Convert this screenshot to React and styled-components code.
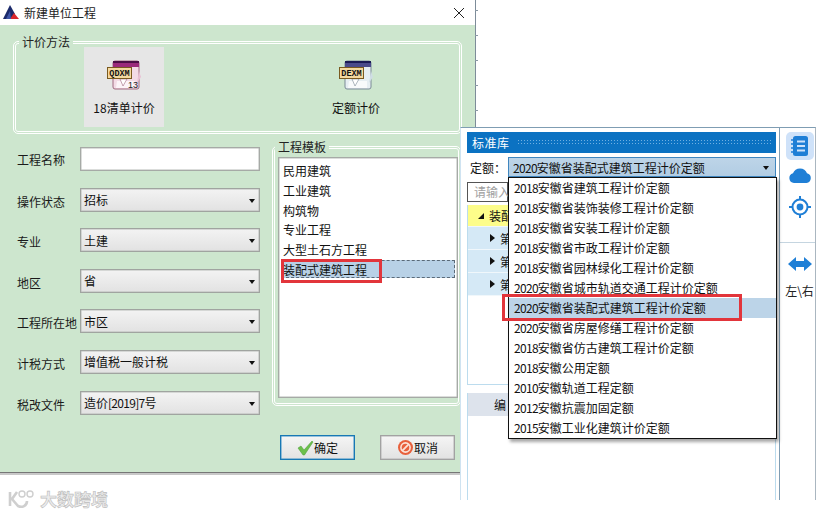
import React from "react";
import styled, { createGlobalStyle } from "styled-components";

const Global = createGlobalStyle`
  html, body { margin: 0; padding: 0; background: #fff; }
  * { box-sizing: border-box; }
  body { font-family: "Noto Sans CJK SC", "Liberation Sans", sans-serif; font-size: 12px; color: #111; }
`;

const Desktop = styled.div`
  position: relative;
  width: 823px;
  height: 516px;
  overflow: hidden;
  background: #fff;
`;

const DialogWindow = styled.div`
  position: absolute;
  left: 0;
  top: 0;
  width: 476px;
  height: 475px;
  display: flex;
  flex-direction: column;
  background: #cde6ce;
  border-right: 1.5px solid #7d8c99;
  border-bottom: 2px solid #c8c8c8;
  box-shadow: inset 0 -1px 0 #777;
  &::after {
    content: "";
    position: absolute;
    left: 100%;
    top: 10px;
    width: 3px;
    height: 110px;
    background: repeating-linear-gradient(#8a98a4 0 1px, transparent 1px 25px);
  }
`;

const TitleBar = styled.div`
  height: 25px;
  flex: none;
  display: flex;
  align-items: center;
  background: #fff;
  padding: 0 9px 0 3px;
  gap: 4px;
`;

const TitleText = styled.span`
  flex: 1;
  line-height: 25px;
  color: #222;
`;

const CloseMark = styled.svg`
  width: 12px;
  height: 12px;
  margin-right: 1px;
`;

const Group = styled.fieldset`
  margin: ${(p) => p.$margin};
  padding: ${(p) => p.$padding};
  min-width: 0;
  align-self: flex-start;
  border: 3px double #fff;
  border-radius: 5px;
`;

const GroupTitle = styled.legend`
  margin-left: ${(p) => p.$inset}px;
  padding: 0 3px;
  line-height: 10px;
  color: #222;
`;

const MethodGroup = styled(Group)`
  align-self: stretch;
`;

const MethodRow = styled.div`
  display: flex;
  height: 80px;
  padding-left: 68px;
  gap: 152px;
`;

const MethodTile = styled.div`
  width: 80px;
  height: 80px;
  display: flex;
  flex-direction: column;
  align-items: center;
  padding-top: 12px;
  background: ${(p) => (p.$active ? "#e6e6e6" : "transparent")};
`;

const MethodIcon = styled.svg`
  width: 34px;
  height: 32px;
  flex: none;
`;

const MethodName = styled.span`
  margin-top: 8px;
  line-height: 18px;
`;

const FormArea = styled.div`
  display: flex;
  margin-top: 13px;
  padding-left: 17px;
`;

const FieldGrid = styled.div`
  width: 243px;
  display: grid;
  grid-template-columns: 63px 180px;
  grid-auto-rows: 24px;
  row-gap: 16.6px;
  align-items: center;
`;

const FieldLabel = styled.span`
  padding-top: ${(p) => (p.$flat ? 0 : 3)}px;
  white-space: nowrap;
  color: #1a1a1a;
`;

const TextInput = styled.div`
  height: 24px;
  background: #fff;
  border: 1px solid #a6aaa6;
  box-shadow: inset 0 0 0 0.5px #b8bcb8;
`;

const SelectBox = styled.div`
  height: 24px;
  display: flex;
  align-items: center;
  justify-content: space-between;
  padding: 0 4px 0 3px;
  background: linear-gradient(#f3f3f3, #e2e2e2);
  border: 1px solid #a0a4a0;
  box-shadow: inset 0 0 0 0.5px #b8bcb8;
  color: #111;
`;

const Num = styled.span`
  letter-spacing: -0.7px;
`;

const Caret = styled.i`
  width: 0;
  height: 0;
  margin-top: 2px;
  border-left: 3.5px solid transparent;
  border-right: 3.5px solid transparent;
  border-top: 4px solid #111;
`;

const TemplateList = styled.div`
  width: 180px;
  height: 241px;
  margin: 5px 0 0 3px;
  padding: 3px 2px;
  background: #fff;
  border: 1px solid #a6aaa6;
  box-shadow: inset 0 0 0 0.5px #b8bcb8;
`;

const TemplateItem = styled.div`
  height: ${(p) => (p.$selected ? 18 : 19.8)}px;
  line-height: 20px;
  padding-left: 2px;
  background: ${(p) => (p.$selected ? "#b8d1e6" : "transparent")};
  outline: ${(p) => (p.$selected ? "1px dashed #5a6a78" : "none")};
  outline-offset: -1px;
`;

const Footer = styled.div`
  display: flex;
  justify-content: flex-end;
  gap: 25px;
  margin-top: 20px;
  padding-right: 20px;
`;

const ActionButton = styled.div`
  width: 75px;
  height: 25px;
  display: flex;
  align-items: center;
  justify-content: center;
  gap: 0;
  background: linear-gradient(#f5f5f5, #e2e2e2);
  border: 1px solid ${(p) => (p.$primary ? "#1878b4" : "#a2a2a2")};
  box-shadow: inset 0 0 0 0.5px ${(p) => (p.$primary ? "#3a90c4" : "#b4b4b4")};
`;

const ButtonIcon = styled.svg`
  width: 17px;
  height: 17px;
`;

const RedFrame = styled.div`
  position: absolute;
  left: ${(p) => p.$x}px;
  top: ${(p) => p.$y}px;
  width: ${(p) => p.$w}px;
  height: ${(p) => p.$h}px;
  border: 3px solid #e2353b;
  pointer-events: none;
`;

const Watermark = styled.div`
  position: absolute;
  left: 7px;
  top: 488px;
  display: flex;
  align-items: center;
  gap: 4px;
`;

const WatermarkText = styled.span`
  font-size: 17px;
  line-height: 22px;
  font-weight: 700;
  color: #ececec;
  -webkit-text-stroke: 0.6px #bdbdbd;
`;

const LibraryWindow = styled.div`
  position: absolute;
  left: 460px;
  top: 127px;
  width: 356px;
  height: 373px;
  display: flex;
  background: #fff;
  border-top: 1px solid #7f9db3;
  border-left: 1px solid #cfe3f1;
  border-right: 1px solid #aab6c0;
`;

const LibraryMain = styled.div`
  position: relative;
  width: 319px;
  flex: none;
  padding: 4px 3px 0 6px;
  display: flex;
  flex-direction: column;
  border-right: 1.5px solid #7f9db3;
`;

const Banner = styled.div`
  height: 21px;
  flex: none;
  display: flex;
  align-items: center;
  padding: 0 5px;
  gap: 7px;
  background: #0b72c2;
  color: #fff;
  letter-spacing: 0.5px;
`;

const BannerDots = styled.i`
  flex: 1;
  height: 7px;
  background-image: radial-gradient(circle, #6fb0e2 0.6px, transparent 0.9px);
  background-size: 3px 3px;
`;

const ComboRow = styled.div`
  display: flex;
  align-items: center;
  height: 20px;
  margin-top: 4px;
  padding-left: 3px;
`;

const ComboLabel = styled.span`
  width: 38px;
  flex: none;
`;

const ComboBox = styled.div`
  flex: 1;
  height: 20px;
  display: flex;
  align-items: center;
  justify-content: space-between;
  padding: 0 6px 0 4px;
  background: linear-gradient(#bdd4e8, #b2cde3);
  border: 1px solid #3f86bf;
`;

const SearchBox = styled.div`
  width: 41px;
  height: 20px;
  margin-top: 5px;
  padding-left: 6px;
  line-height: 18px;
  color: #a0a0a0;
  border: 1px solid #555;
  background: #fff;
  white-space: nowrap;
`;

const TreeBox = styled.div`
  height: 180px;
  margin-top: 3px;
  border: 1px solid #bcdcee;
  border-top: none;
`;

const TreeRow = styled.div`
  height: ${(p) => (p.$root ? 22 : 23)}px;
  display: flex;
  align-items: center;
  gap: 5px;
  padding-left: ${(p) => (p.$root ? 10 : 22)}px;
  background: ${(p) => (p.$root ? "#fdfd8a" : "#d5e9f6")};
  border-bottom: 1px solid #f0f7fb;
  white-space: nowrap;
`;

const TreeArrow = styled.i`
  width: 0;
  height: 0;
  flex: none;
  ${(p) =>
    p.$open
      ? "border-bottom: 6px solid #111; border-left: 6px solid transparent;"
      : "border-left: 5px solid #111; border-top: 4px solid transparent; border-bottom: 4px solid transparent;"}
`;

const TableBox = styled.div`
  flex: 1;
  margin-top: 8px;
  border-left: 1px solid #bcdcee;
  border-right: 1px solid #bcdcee;
`;

const TableHead = styled.div`
  height: 23px;
  line-height: 23px;
  padding-left: 26px;
  background: #dde3ec;
`;

const DropList = styled.div`
  position: absolute;
  left: 47px;
  top: 49px;
  width: 269px;
  height: 262px;
  background: #fff;
  border: 1px solid #111;
  box-shadow: 2px 3px 3px rgba(0, 0, 0, 0.35);
`;

const DropItem = styled.div`
  height: 20px;
  line-height: 20px;
  padding-left: 5px;
  white-space: nowrap;
  background: ${(p) => (p.$current ? "#bcd4e8" : "transparent")};
`;

const ToolStrip = styled.div`
  flex: 1;
  display: flex;
  flex-direction: column;
  align-items: center;
`;

const ToolTile = styled.div`
  width: 28px;
  height: 28px;
  margin: 4px 0 0 4px;
  display: flex;
  align-items: center;
  justify-content: center;
  border-radius: 5px;
  background: ${(p) => (p.$active ? "#cfe2f9" : "transparent")};
`;

const ToolIcon = styled.svg`
  width: 24px;
  height: 24px;
  margin-left: 4px;
  margin-top: ${(p) => p.$top}px;
  flex: none;
`;

const ToolDivider = styled.div`
  align-self: stretch;
  height: 1px;
  margin-top: 23px;
  background: #c5d5e0;
`;

const ToolCaption = styled.span`
  margin: 6px 0 0 4px;
  color: #222;
`;

const Hue = "#1f7fd6";

const AppLogo = () => (
  <svg width="17" height="15" viewBox="0 0 17 15">
    <polygon points="0,14 7,0 12,9 8,14" fill="#1b2a6b" />
    <polygon points="7,14 11,8 16,14" fill="#d8262c" />
    <polygon points="3,14 7,6 8,14" fill="#3f56a8" />
  </svg>
);

const DocIcon = ({ bar, barDark, page, fold, code, edge, num }) => (
  <MethodIcon viewBox="0 0 34 32">
    <rect x="6" y="2" width="26" height="28" rx="2" fill={page} stroke={edge} />
    <rect x="6" y="2" width="26" height="6" fill={bar} />
    <rect x="6" y="2" width="26" height="2" fill={barDark} />
    <path d="M32 12 L34 18 L30 24 Z" fill={fold} />
    <path d="M10 22 L28 22 L28 29 L9 29 Z" fill="#fff" opacity="0.7" />
    <path d="M13 20 L16 27 L20 20 Z" fill="#fff" stroke={edge} strokeWidth="0.6" />
    <rect x="0.5" y="8.5" width="24" height="11" fill="#f4d9a0" stroke="#7a5a20" />
    <text x="12.5" y="17" textAnchor="middle" fontFamily="Liberation Mono, monospace" fontWeight="700" fontSize="8.5" fill="#111">{code}</text>
    {num ? <text x="26" y="29" textAnchor="middle" fontFamily="Liberation Sans, sans-serif" fontSize="9" fill="#222">{num}</text> : null}
  </MethodIcon>
);

const fields = [
  ["操作状态", "招标"],
  ["专业", "土建"],
  ["地区", "省"],
  ["工程所在地", "市区"],
  ["计税方式", "增值税一般计税"],
  ["税改文件", <>造价<Num>[2019]7</Num>号</>],
];

const templates = ["民用建筑", "工业建筑", "构筑物", "专业工程", "大型土石方工程", "装配式建筑工程"];

const quotas = [
  "2018安徽省建筑工程计价定额",
  "2018安徽省装饰装修工程计价定额",
  "2018安徽省安装工程计价定额",
  "2018安徽省市政工程计价定额",
  "2018安徽省园林绿化工程计价定额",
  "2020安徽省城市轨道交通工程计价定额",
  "2020安徽省装配式建筑工程计价定额",
  "2020安徽省房屋修缮工程计价定额",
  "2018安徽省仿古建筑工程计价定额",
  "2018安徽公用定额",
  "2010安徽轨道工程定额",
  "2012安徽抗震加固定额",
  "2015安徽工业化建筑计价定额",
];

export default function App() {
  return (
    <Desktop>
      <Global />
      <DialogWindow>
        <TitleBar>
          <AppLogo />
          <TitleText>新建单位工程</TitleText>
          <CloseMark viewBox="0 0 12 12">
            <path d="M1 1 L11 11 M11 1 L1 11" stroke="#222" strokeWidth="1" fill="none" />
          </CloseMark>
        </TitleBar>

        <MethodGroup $margin="12px 13px 0" $padding="0 0 4px 0">
          <GroupTitle $inset={3}>计价方法</GroupTitle>
          <MethodRow>
            <MethodTile $active>
              <DocIcon bar="#9a2a7a" barDark="#4a0f45" page="#f3dbe6" fold="#e8c0d4" edge="#a06a80" code="QDXM" num="13" />
              <MethodName>18清单计价</MethodName>
            </MethodTile>
            <MethodTile>
              <DocIcon bar="#4a4a8a" barDark="#1a1a55" page="#e6eef2" fold="#cfdde4" edge="#7a8a96" code="DEXM" />
              <MethodName>定额计价</MethodName>
            </MethodTile>
          </MethodRow>
        </MethodGroup>

        <FormArea>
          <FieldGrid>
            <FieldLabel $flat>工程名称</FieldLabel>
            <TextInput />
            {fields.map(([label, value]) => (
              <React.Fragment key={label}>
                <FieldLabel>{label}</FieldLabel>
                <SelectBox>
                  <span>{value}</span>
                  <Caret />
                </SelectBox>
              </React.Fragment>
            ))}
          </FieldGrid>
          <Group $margin="-5px 0 0 12px" $padding="0 0 5px 0">
            <GroupTitle $inset={0}>工程模板</GroupTitle>
            <TemplateList>
              {templates.map((t, i) => (
                <TemplateItem key={t} $selected={i === 5}>{t}</TemplateItem>
              ))}
            </TemplateList>
          </Group>
        </FormArea>

        <Footer>
          <ActionButton $primary>
            <ButtonIcon viewBox="0 0 17 17">
              <path d="M1 9 L4 7 L7 11 L15 2 L16 3 L7.5 16 L6 16 Z" fill="#6cc04a" stroke="#4a9a38" strokeWidth="0.5" />
            </ButtonIcon>
            确定
          </ActionButton>
          <ActionButton>
            <ButtonIcon viewBox="0 0 17 17">
              <circle cx="8.5" cy="8.5" r="7.5" fill="#e8603c" />
              <circle cx="8.5" cy="8.5" r="4.6" fill="none" stroke="#fbe3d8" strokeWidth="1.6" />
              <path d="M5.2 11.8 L11.8 5.2" stroke="#fbe3d8" strokeWidth="1.8" />
            </ButtonIcon>
            取消
          </ActionButton>
        </Footer>
      </DialogWindow>

      <LibraryWindow>
        <LibraryMain>
          <Banner>
            标准库
            <BannerDots />
          </Banner>
          <ComboRow>
            <ComboLabel>定额：</ComboLabel>
            <ComboBox>
              <span><Num>2020</Num>安徽省装配式建筑工程计价定额</span>
              <Caret />
            </ComboBox>
          </ComboRow>
          <SearchBox>请输入</SearchBox>
          <TreeBox>
            <TreeRow $root>
              <TreeArrow $open />
              装配
            </TreeRow>
            <TreeRow><TreeArrow />第</TreeRow>
            <TreeRow><TreeArrow />第</TreeRow>
            <TreeRow><TreeArrow />第</TreeRow>
          </TreeBox>
          <TableBox>
            <TableHead>编</TableHead>
          </TableBox>
          <DropList>
            {quotas.map((q, i) => (
              <DropItem key={q} $current={i === 6}><Num>{q.slice(0, 4)}</Num>{q.slice(4)}</DropItem>
            ))}
          </DropList>
        </LibraryMain>
        <ToolStrip>
          <ToolTile $active>
            <svg width="20" height="22" viewBox="0 0 20 22">
              <rect x="3" y="1" width="15" height="20" rx="2.5" fill={Hue} />
              <path d="M1 5 H5 M1 9 H5 M1 13 H5 M1 17 H5" stroke={Hue} strokeWidth="1.6" />
              <path d="M7 6.5 H15 M7 11 H15 M7 15.5 H15" stroke="#cfe2f9" strokeWidth="1.8" />
            </svg>
          </ToolTile>
          <ToolIcon $top={4} viewBox="0 0 24 24">
            <path d="M6 19 a5 5 0 0 1 -1 -9.8 A7.5 7.5 0 0 1 19 9.2 A5 5 0 0 1 18.5 19 Z" fill={Hue} />
          </ToolIcon>
          <ToolIcon $top={7} viewBox="0 0 24 24">
            <circle cx="12" cy="12" r="7.5" fill="none" stroke={Hue} strokeWidth="2" />
            <circle cx="12" cy="12" r="3.4" fill={Hue} />
            <path d="M12 1 V5 M12 19 V23 M1 12 H5 M19 12 H23" stroke={Hue} strokeWidth="2" />
          </ToolIcon>
          <ToolDivider />
          <ToolIcon $top={9} viewBox="0 0 24 24">
            <path d="M0 12 L8 5 V9 H16 V5 L24 12 L16 19 V15 H8 V19 Z" fill={Hue} />
          </ToolIcon>
          <ToolCaption>左\右</ToolCaption>
        </ToolStrip>
      </LibraryWindow>

      <RedFrame $x={281} $y={259} $w={101} $h={24} />
      <RedFrame $x={502} $y={294} $w={240} $h={27} />

      <Watermark>
        <svg width="29" height="20" viewBox="0 0 29 20">
          <path d="M3 3 V17 M10 3 L5 10 L11 17 C15 19 20 17 20 12" fill="none" stroke="#cfcfcf" strokeWidth="2.6" />
          <circle cx="15" cy="5" r="3" fill="none" stroke="#cfcfcf" strokeWidth="1.4" />
          <circle cx="23" cy="5" r="3" fill="none" stroke="#cfcfcf" strokeWidth="1.4" />
        </svg>
        <WatermarkText>大数跨境</WatermarkText>
      </Watermark>
    </Desktop>
  );
}
